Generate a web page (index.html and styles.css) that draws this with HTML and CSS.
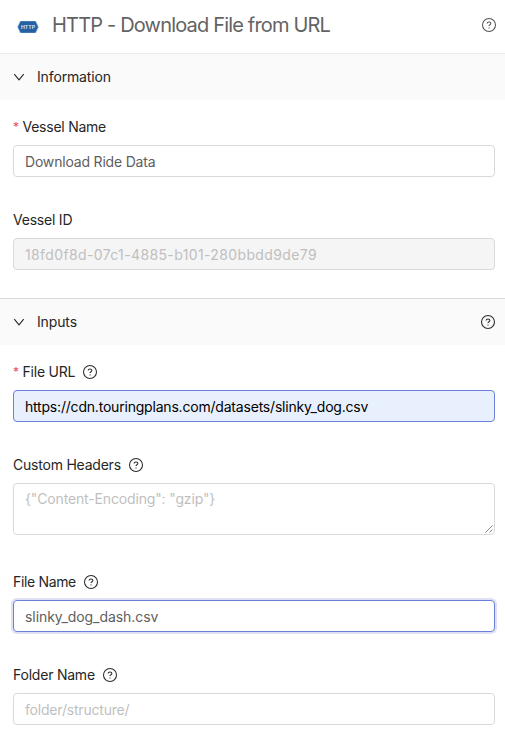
FILE: index.html
```html
<!DOCTYPE html>
<html lang="en">
<head>
<meta charset="utf-8">
<title>HTTP - Download File from URL</title>
<link rel="stylesheet" href="styles.css">
</head>
<body>
<svg width="0" height="0" class="defs">
  <symbol id="help" viewBox="0 0 16 16"><circle cx="8" cy="8" r="6.5"/><path d="M6.100 6.600c0-1 .8-1.600 1.900-1.600s1.900.6 1.900 1.600c0 1.200-1.900 1.200-1.900 2.500"/><path d="M8 10.400v1.100"/></symbol>
  <symbol id="chevron" viewBox="0 0 12 12"><path d="M1.300 3.200 6 8.800 10.700 3.200"/></symbol>
</svg>
<header class="title-bar">
  <svg class="logo" viewBox="0 0 22 12"><path class="edge" d="M3 .3h16l2.700 5.700-2.700 5.700H3L.3 6z"/><path d="M3.800.3h14.400L20.800 6l-2.600 5.700H3.800L1.200 6z"/><text x="11" y="7.700" text-anchor="middle" textLength="14" lengthAdjust="spacingAndGlyphs">HTTP</text></svg>
  <h1>HTTP - Download File from URL</h1>
  <svg class="help"><use href="#help"/></svg>
</header>
<section>
  <div class="section-head"><svg class="chevron"><use href="#chevron"/></svg><h2>Information</h2></div>
  <div class="fields info">
    <div class="field"><label><span class="required">*</span><span class="l-name">Vessel Name</span></label><div class="input"><span class="v-name">Download Ride Data</span></div></div>
    <div class="field"><label><span class="l-id">Vessel ID</span></label><div class="input disabled"><span class="v-id">18fd0f8d-07c1-4885-b101-280bbdd9de79</span></div></div>
  </div>
</section>
<section>
  <div class="section-head inputs"><svg class="chevron"><use href="#chevron"/></svg><h2>Inputs</h2><svg class="help"><use href="#help"/></svg></div>
  <div class="fields">
    <div class="field"><label><span class="required">*</span><span class="l-url">File URL</span><svg class="help"><use href="#help"/></svg></label><div class="input filled"><span class="v-url">https://cdn.touringplans.com/datasets/slinky_dog.csv</span></div></div>
    <div class="field tall"><label><span class="l-head">Custom Headers</span><svg class="help"><use href="#help"/></svg></label><div class="input area placeholder"><span class="v-head">{"Content-Encoding": "gzip"}</span><svg class="grip" viewBox="0 0 8 8"><path d="M.5 7.500 7.500.5M4.500 7.500l3-3"/></svg></div></div>
    <div class="field"><label><span class="l-file">File Name</span><svg class="help"><use href="#help"/></svg></label><div class="input focused"><span class="v-file">slinky_dog_dash.csv</span></div></div>
    <div class="field"><label><span class="l-folder">Folder Name</span><svg class="help"><use href="#help"/></svg></label><div class="input placeholder"><span class="v-folder">folder/structure/</span></div></div>
  </div>
</section>
</body>
</html>
```

FILE: styles.css
```css
* { box-sizing: border-box; }
body { margin: 0; height: 742px; overflow: hidden; background: #fff; color: #262626; font: 14px/22px Inter, sans-serif; }
.defs { position: absolute; }
.title-bar { height: 53px; display: flex; align-items: center; padding: 0 8px 3px 17px; }
.logo { width: 22px; height: 12px; margin-top: 4px; fill: #2460a3; }
.logo .edge { fill: #6fa8d8; }
.logo text { font: 600 4.8px Inter, sans-serif; fill: #e3edf7; }
h1 { margin: 0 0 0 13px; font-size: 20px; line-height: 28px; font-weight: 400; color: #636363; letter-spacing: -.82px; white-space: nowrap; }
h2 { margin: 0; font-size: 14px; font-weight: 400; letter-spacing: -.14px; }
.help { width: 16px; height: 16px; fill: none; stroke: #2b2b2b; stroke-width: 1.05; flex: none; }
.title-bar .help, .section-head .help { margin-left: auto; }
.title-bar .help { stroke: #555; }
.section-head { display: flex; align-items: center; height: 47px; padding: 0 9px 0 13px; background: #fafafa; border-top: 1px solid #ececec; }
.section-head.inputs { border-top-color: #d9d9d9; }
.chevron { width: 12px; height: 12px; margin-right: 12px; fill: none; stroke: #262626; stroke-width: 1.1; }
.fields { padding: 16px 10px 0 13px; }
.info { height: 198px; }
.field { margin-bottom: 32px; }
.field.tall { margin-bottom: 36px; }
label { height: 29px; display: flex; align-items: flex-start; }
label .help { margin: 3px 0 0 7px; }
.required { color: #f04a48; width: 9.5px; font-size: 12px; }
.input { height: 32px; padding: 5px 11px; border: 1px solid #d9d9d9; border-radius: 4px; line-height: 22px; color: #5e5e5e; white-space: nowrap; }
.disabled { background: #f5f5f5; color: #bfbfbf; }
.placeholder { color: #bfbfbf; }
.filled { background: #e8f0fe; border-color: #6b80d8; color: #000; }
.focused { border-color: #6b80d8; box-shadow: 0 0 0 2px #dfe0f5; }
.area { height: 52px; position: relative; padding-top: 4px; }
.grip { position: absolute; right: 1px; bottom: 1px; width: 8px; height: 8px; fill: none; stroke: #666; stroke-width: .8; }
.l-name { letter-spacing: -.25px; }
.l-id { letter-spacing: -.22px; }
.l-url { letter-spacing: -.22px; }
.l-head { letter-spacing: -.22px; }
.l-file { letter-spacing: -.34px; }
.l-folder { letter-spacing: -.22px; }
.v-name { letter-spacing: -.19px; }
.v-id { letter-spacing: .37px; }
.v-url { letter-spacing: -.2px; }
.v-head { letter-spacing: -.15px; }
.v-file { letter-spacing: -.07px; }
.v-folder { letter-spacing: -.2px; }
```
